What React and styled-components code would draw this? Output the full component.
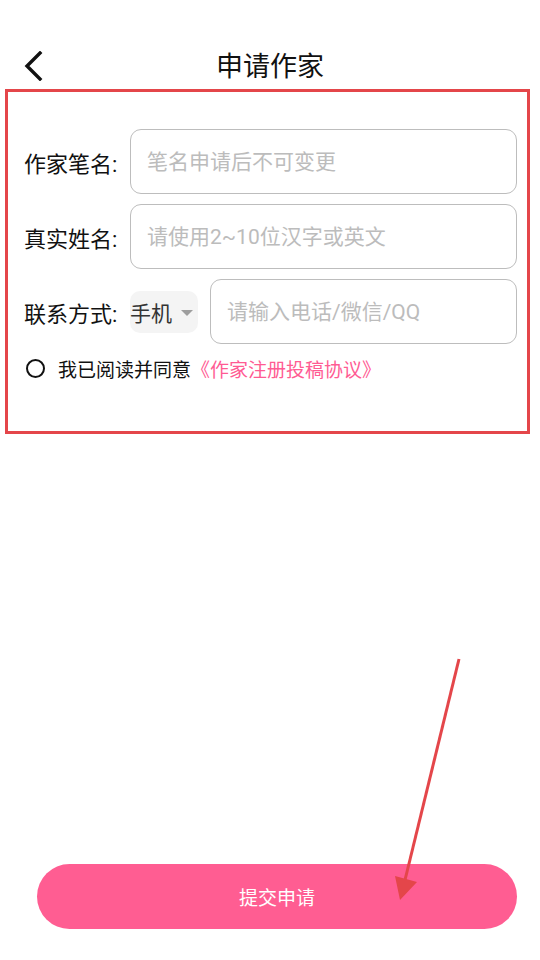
import React from "react";
import styled, { createGlobalStyle } from "styled-components";

const Global = createGlobalStyle`
  html, body { margin: 0; padding: 0; background: #fff; }
  body { font-family: Roboto, "Noto Sans CJK SC", "Noto Sans", sans-serif; color: #111; }
  * { box-sizing: border-box; }
`;

const Page = styled.div`
  position: relative;
  width: 540px;
  min-height: 960px;
  display: flex;
  flex-direction: column;
  padding-bottom: 31px;
`;

const Header = styled.header`
  position: relative;
  height: 89px;
  padding-top: 46px;
  display: flex;
  justify-content: center;
`;

const BackButton = styled.button`
  position: absolute;
  left: 18px;
  top: 46px;
  width: 32px;
  height: 40px;
  padding: 0;
  border: none;
  background: none;
  display: flex;
  align-items: center;
  justify-content: center;
`;

const Title = styled.h1`
  margin: 0;
  font-size: 27px;
  font-weight: 400;
  line-height: 42px;
  color: #111;
`;

const Annotated = styled.section`
  margin: 0 10px 0 5px;
  height: 345px;
  border: 3px solid #e4464a;
  padding: 37px 10px 0 16px;
  display: flex;
  flex-direction: column;
  gap: 10px;
`;

const Row = styled.div`
  display: flex;
  align-items: center;
  height: 65px;
`;

const Label = styled.label`
  width: 106px;
  flex: none;
  font-size: 22px;
  color: #111;
  white-space: nowrap;
`;

const Field = styled.input`
  flex: 1;
  min-width: 0;
  height: 65px;
  border: 1px solid #bdbdbd;
  border-radius: 11px;
  padding: 0 0 0 16px;
  font-family: inherit;
  font-size: 21px;
  color: #333;
  outline: none;
  background: #fff;
  &::placeholder { color: #bcbcbc; }
`;

const Select = styled.div`
  flex: none;
  width: 68px;
  height: 42px;
  margin-right: 12px;
  border-radius: 10px;
  background: #f4f4f4;
  display: flex;
  align-items: center;
  gap: 9px;
  font-size: 21px;
  color: #333;
`;

const Caret = styled.span`
  width: 0;
  height: 0;
  border-left: 6px solid transparent;
  border-right: 6px solid transparent;
  border-top: 6px solid #9e9e9e;
  margin-top: 2px;
`;

const Agree = styled.div`
  display: flex;
  align-items: center;
  margin-top: 2px;
  height: 24px;
  font-size: 19px;
  color: #111;
`;

const Radio = styled.span`
  width: 19px;
  height: 19px;
  border: 2px solid #111;
  border-radius: 50%;
  margin: 0 13px 0 2px;
  flex: none;
`;

const Link = styled.span`
  color: #ff5b93;
`;

const Submit = styled.button`
  margin: auto 23px 0 37px;
  height: 65px;
  border: none;
  border-radius: 33px;
  background: #ff5d92;
  color: #fff;
  font-family: inherit;
  font-size: 19px;
`;

const Overlay = styled.svg`
  position: absolute;
  left: 0;
  top: 0;
  pointer-events: none;
`;

export default function App() {
  return (
    <Page>
      <Global />
      <Header>
        <BackButton aria-label="返回">
          <svg width="20" height="30" viewBox="0 0 20 30">
            <path d="M16 2 L3 15 L16 28" fill="none" stroke="#111" strokeWidth="3.4" strokeLinecap="square" />
          </svg>
        </BackButton>
        <Title>申请作家</Title>
      </Header>
      <Annotated>
        <Row>
          <Label>作家笔名:</Label>
          <Field placeholder="笔名申请后不可变更" />
        </Row>
        <Row>
          <Label>真实姓名:</Label>
          <Field placeholder="请使用2~10位汉字或英文" />
        </Row>
        <Row>
          <Label>联系方式:</Label>
          <Select>
            手机
            <Caret />
          </Select>
          <Field placeholder="请输入电话/微信/QQ" />
        </Row>
        <Agree>
          <Radio />
          我已阅读并同意<Link>《作家注册投稿协议》</Link>
        </Agree>
      </Annotated>
      <Submit>提交申请</Submit>
      <Overlay width="540" height="960" viewBox="0 0 540 960">
        <line x1="459" y1="659" x2="405" y2="880" stroke="#e4464a" strokeWidth="3" />
        <polygon points="395,876 417,882 400,900" fill="#e4464a" />
      </Overlay>
    </Page>
  );
}
